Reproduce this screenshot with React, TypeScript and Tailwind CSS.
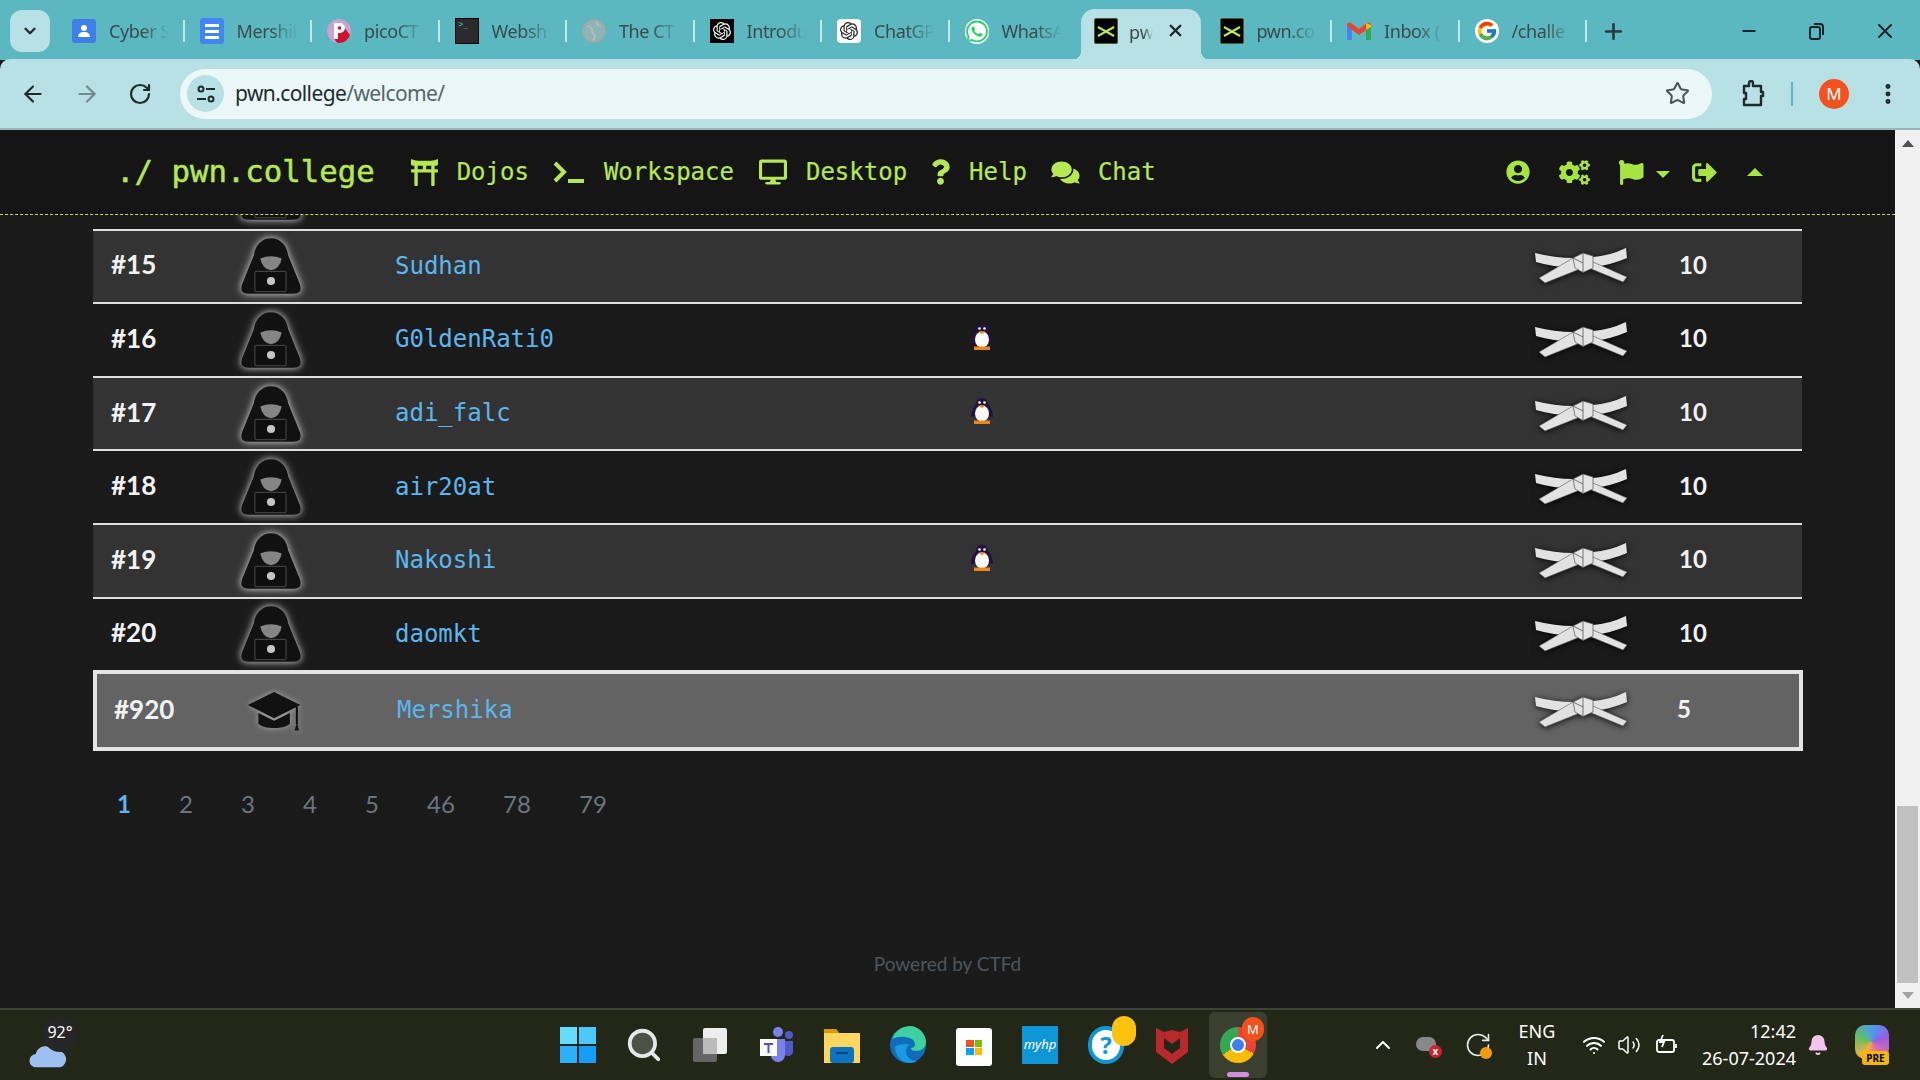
import type { ReactNode } from "react";
import { FaToriiGate, FaDesktop, FaQuestion, FaComments, FaUserCircle, FaCogs, FaFlag, FaSignOutAlt, FaWhatsapp } from "react-icons/fa";
import { SiOpenai } from "react-icons/si";
import { FcGoogle } from "react-icons/fc";
import { ArrowLeft, ArrowRight, RotateCw, Star, EllipsisVertical, Plus, Minus, X, ChevronDown, ChevronUp, Search, Wifi, Volume2, Bell } from "lucide-react";

const Hacker = () => (
  <svg viewBox="0 0 56 52" className="w-[60px] h-[56px] overflow-visible [filter:drop-shadow(0_0_3px_rgba(255,255,255,0.6))_drop-shadow(0_0_5px_rgba(255,255,255,0.35))]">
    <path d="M28 0C37 0 43 7 44 16L55 43Q58 52 48 52H8Q-2 52 1 43L12 16C13 7 19 0 28 0z" fill="#111" />
    <path d="M18 19Q28 15 38 19Q36 29 28 30Q20 29 18 19z" fill="#858585" />
    <rect x="13" y="31" width="29" height="19" rx="1" fill="#0e0e0e" stroke="#5f5f5f" strokeWidth="0.7" />
    <circle cx="28" cy="40" r="3.8" fill="#c4c4c4" />
  </svg>
);

const GradCap = () => (
  <svg viewBox="0 0 64 48" className="w-[56px] h-[42px] mt-[3px] overflow-visible [filter:drop-shadow(0_0_3px_rgba(255,255,255,0.45))]">
    <path d="M31 1 1 16l30 15 30-15z" fill="#111" />
    <path d="M13 25v12c5 7 31 7 36 0V25L31 34z" fill="#111" />
    <path d="M57 18v20" stroke="#111" strokeWidth="2.4" />
    <path d="M57 36l2.6 9h-5.200z" fill="#111" />
  </svg>
);

const Belt = () => (
  <svg viewBox="0 0 94 36" className="w-[94px] h-[36px] overflow-visible [filter:drop-shadow(0_1px_3px_rgba(0,0,0,0.85))]">
    <path d="M0 5Q20 10 38 10L40 20Q18 19 1 14z" fill="#e2e2e2" />
    <path d="M91 0Q74 8 58 9V19Q76 17 92 10z" fill="#e2e2e2" />
    <path d="M38 10 4 30l6 5 40-16z" fill="#e2e2e2" stroke="#555" strokeWidth="0.6" />
    <path d="M58 14 92 29l-4 5-39-16z" fill="#e2e2e2" stroke="#555" strokeWidth="0.6" />
    <path d="M38 10l10-5 10 3v12l-10 4.500-8-4.500z" fill="#e4e4e4" stroke="#555" strokeWidth="0.7" />
    <path d="M48 5v19.500M38 10l10 5" stroke="#555" strokeWidth="0.8" fill="none" />
  </svg>
);

const Penguin = () => (
  <svg viewBox="0 0 24 26" className="w-[24px] h-[26px] -mt-[6px]">
    <path d="M12 0c4 0 6 3 6 6 3 3 5 9 5 12 0 2-2 1-3 0-1 3-4 5-8 5s-7-2-8-5c-1 1-3 2-3 0 0-3 2-9 5-12 0-3 2-6 6-6z" fill="#26123e" />
    <ellipse cx="12" cy="15.500" rx="7" ry="8" fill="#fbfbfb" />
    <circle cx="9.500" cy="4.500" r="1.300" fill="#fff" />
    <circle cx="14.500" cy="4.500" r="1.300" fill="#fff" />
    <path d="M8.500 7.500h7L12 10.500z" fill="#f39a1d" />
    <rect x="4" y="22.500" width="16" height="3.500" fill="#f0851c" />
  </svg>
);

const PwnIcon = () => (
  <div className="w-[24px] h-[26px] bg-black rounded-[2px] flex items-center justify-center border border-[#4a5a20]">
    <svg viewBox="0 0 20 14" className="w-[18px] h-[13px]">
      <path d="M1 2l18 10M19 2 1 12" stroke="#b5e853" strokeWidth="2.4" />
    </svg>
  </div>
);

type TabInfo = { title: string; icon: ReactNode; sep?: boolean };

const tabs: TabInfo[] = [
  {
    title: "Cyber S",
    sep: true,
    icon: (
      <div className="w-[24px] h-[24px] rounded-[3px] bg-[#3f7fe8] flex flex-col items-center justify-center">
        <div className="w-[6px] h-[6px] rounded-full bg-white" />
        <div className="w-[12px] h-[5px] rounded-t-md bg-white mt-[1px]" />
      </div>
    ),
  },
  {
    title: "Mershil",
    sep: true,
    icon: (
      <div className="w-[24px] h-[26px] rounded-[3px] bg-[#4285f4] flex flex-col items-center justify-center gap-[3px]">
        <div className="w-[14px] h-[3px] bg-white" />
        <div className="w-[14px] h-[3px] bg-white" />
        <div className="w-[14px] h-[3px] bg-white" />
      </div>
    ),
  },
  {
    title: "picoCT",
    sep: true,
    icon: (
      <svg viewBox="0 0 24 24" className="w-[24px] h-[24px]">
        <circle cx="12" cy="12" r="12" fill="#c9a2d0" />
        <path d="M7 19 17 8l6 8a12 12 0 0 1-11 8c-2 0-4-2-5-5z" fill="#cf0f2e" />
        <path d="M7 4h6a5 5 0 0 1 0 10h-2v6H7z" fill="#fff" />
        <circle cx="12.500" cy="9" r="1.800" fill="#cf0f2e" />
      </svg>
    ),
  },
  {
    title: "Websh",
    sep: true,
    icon: (
      <div className="w-[24px] h-[26px] bg-[#2a2a2a] border border-black pl-[3px] pt-[1px] text-[8px] leading-[10px] text-[#5cb8c0] font-['DejaVu_Sans_Mono',monospace]">&gt;_</div>
    ),
  },
  {
    title: "The CT",
    sep: true,
    icon: (
      <svg viewBox="0 0 24 24" className="w-[24px] h-[24px]">
        <circle cx="12" cy="12" r="11" fill="#8db4b8" stroke="#a6a6a6" strokeWidth="1.5" />
        <path d="M5 7c4 1 6 3 5 6l3 4-2 5M15 2c-1 3 1 5 4 5" stroke="#b9b9b9" strokeWidth="2" fill="none" />
      </svg>
    ),
  },
  {
    title: "Introdu",
    sep: true,
    icon: (
      <div className="w-[24px] h-[24px] bg-black flex items-center justify-center">
        <SiOpenai className="w-[18px] h-[18px] text-white" />
      </div>
    ),
  },
  {
    title: "ChatGP",
    sep: true,
    icon: (
      <div className="w-[24px] h-[24px] bg-white rounded-[4px] flex items-center justify-center">
        <SiOpenai className="w-[18px] h-[18px] text-[#222]" />
      </div>
    ),
  },
  { title: "WhatsA", icon: <FaWhatsapp className="w-[25px] h-[25px] text-[#25d366] bg-white rounded-full" /> },
];

const tabsAfter: TabInfo[] = [
  { title: "pwn.co", sep: true, icon: <PwnIcon /> },
  {
    title: "Inbox (",
    sep: true,
    icon: (
      <svg viewBox="0 0 24 18" className="w-[24px] h-[20px]">
        <path d="M0 3c0-2 2-3 4-2l8 6 8-6c2-1 4 0 4 2v15h-5V8l-7 5-7-5v10H0z" fill="#ea4335" />
        <path d="M0 18V4l5 4v10z" fill="#4285f4" />
        <path d="M24 18V4l-5 4v10z" fill="#34a853" />
        <path d="M19 1l5 2v2l-5 3z" fill="#fbbc04" />
      </svg>
    ),
  },
  {
    title: "/challe",
    sep: true,
    icon: (
      <div className="w-[24px] h-[24px] bg-white rounded-full flex items-center justify-center">
        <FcGoogle className="w-[22px] h-[22px]" />
      </div>
    ),
  },
];

const Tab = ({ title, icon, sep }: TabInfo) => (
  <div className="w-[127.5px] h-[44px] shrink-0 flex items-center pl-[15px] relative">
    <div className="w-[24px] flex justify-center shrink-0">{icon}</div>
    <span className="ml-[13px] w-[60px] overflow-hidden whitespace-nowrap text-[18px] text-[#3a4a4c] font-['Noto_Sans',sans-serif] tracking-[-0.4px] [mask-image:linear-gradient(90deg,#000_55%,transparent)]">
      {title}
    </span>
    {sep && <div className="absolute right-0 top-[11px] w-[2px] h-[22px] bg-[#c6e5e8]" />}
  </div>
);

const TabStrip = () => (
  <div className="h-[60px] bg-[#5cb8c0] flex items-start shrink-0">
    <div className="ml-[10px] mt-[10px] w-[40px] h-[42px] rounded-[12px] bg-[#b8e1e5] flex items-center justify-center shrink-0">
      <ChevronDown className="w-[18px] h-[18px] text-[#1f2a2c]" strokeWidth={3} />
    </div>
    <div className="ml-[7px] mt-[9px] flex">
      {tabs.map((t) => (
        <Tab key={t.title} {...t} />
      ))}
      <div className="w-[127.5px] h-[51px] shrink-0 px-[4px]">
        <div className="relative h-full rounded-t-[14px] bg-[#b8e1e5] flex items-start pt-[9px] pl-[13px]">
          <PwnIcon />
          <span className="ml-[11px] mt-[1px] w-[24px] overflow-hidden text-[18px] text-[#3a4a4c] font-['Noto_Sans',sans-serif] [mask-image:linear-gradient(90deg,#000_60%,transparent)]">pw</span>
          <X className="ml-[13px] mt-[3px] w-[19px] h-[19px] text-[#1b2426]" strokeWidth={3} />
          <span className="absolute left-[-10px] bottom-0 w-[10px] h-[10px] bg-[radial-gradient(circle_at_0_0,transparent_10px,#b8e1e5_10.5px)]" />
          <span className="absolute right-[-10px] bottom-0 w-[10px] h-[10px] bg-[radial-gradient(circle_at_100%_0,transparent_10px,#b8e1e5_10.5px)]" />
        </div>
      </div>
      {tabsAfter.map((t) => (
        <Tab key={t.title} {...t} />
      ))}
      <Plus className="ml-[14px] mt-[10px] w-[25px] h-[25px] text-[#26393c]" strokeWidth={2.5} />
    </div>
    <div className="ml-auto mt-[19px] flex items-center">
      <Minus className="w-[20px] h-[20px] text-[#1b2426] mr-[47px]" strokeWidth={2.2} />
      <svg viewBox="0 0 20 20" className="w-[20px] h-[20px] mr-[47px]" fill="none" stroke="#1b2426" strokeWidth="2">
        <rect x="4" y="6" width="10" height="12" rx="2" />
        <path d="M8 3h6a3 3 0 0 1 3 3v8" />
      </svg>
      <X className="w-[24px] h-[24px] text-[#1b2426] mr-[23px]" strokeWidth={2} />
    </div>
  </div>
);

const Toolbar = () => (
  <div className="h-[71px] shrink-0 bg-[#b8e1e5] border-b-2 border-[#9ab5b8] rounded-t-[10px] flex items-center -mt-px">
    <ArrowLeft className="ml-[20px] w-[26px] h-[26px] text-[#1f2a2c]" strokeWidth={2} />
    <ArrowRight className="ml-[28px] w-[26px] h-[26px] text-[#74898c]" strokeWidth={2} />
    <RotateCw className="ml-[28px] w-[24px] h-[24px] text-[#1f2a2c]" strokeWidth={2.2} />
    <div className="ml-[28px] w-[1532px] h-[50px] rounded-full bg-[#ebf7f8] flex items-center pl-[7px]">
      <div className="w-[37px] h-[37px] rounded-full bg-[#b8e1e5] flex items-center justify-center">
        <svg viewBox="0 0 20 20" className="w-[20px] h-[20px]" fill="none" stroke="#1f2a2c" strokeWidth="2">
          <circle cx="5" cy="5" r="2.500" />
          <path d="M10 5h9M1 15h9" />
          <circle cx="15" cy="15" r="2.500" />
        </svg>
      </div>
      <span className="ml-[11px] text-[21px] text-[#1f2a2c] font-['Noto_Sans',sans-serif] tracking-[-0.6px]">
        pwn.college<span className="text-[#566668]">/welcome/</span>
      </span>
      <Star className="ml-auto mr-[22px] w-[25px] h-[25px] text-[#4a5658]" strokeWidth={2} />
    </div>
    <svg viewBox="0 0 24 28" className="ml-[29px] w-[24px] h-[28px]" fill="none" stroke="#1f2a2c" strokeWidth="2.4" strokeLinejoin="round">
      <path d="M3 6h5V3a2 2 0 0 1 4 0v3h8v6h2v4h-2v9H3v-6h2v-6H3z" />
    </svg>
    <div className="ml-[26px] w-[2px] h-[24px] bg-[#5cb8c0]" />
    <div className="ml-[26px] w-[30px] h-[30px] rounded-full bg-[#f4511e] text-white text-[17px] flex items-center justify-center font-['Noto_Sans',sans-serif]">M</div>
    <EllipsisVertical className="ml-[26px] w-[26px] h-[26px] text-[#1f2a2c]" strokeWidth={2.6} />
  </div>
);

const NavLink = ({ icon, label, className }: { icon: ReactNode; label: string; className: string }) => (
  <div className={`flex items-center ${className}`}>
    {icon}
    <span className="text-[24px] [-webkit-text-stroke:0.2px]">{label}</span>
  </div>
);

const Nav = () => (
  <nav className="h-[85px] shrink-0 bg-[#151515] border-b border-dashed border-[#c5e04a] flex items-center text-[#b5e853] font-['DejaVu_Sans_Mono',monospace]">
    <span className="ml-[116px] text-[30.7px] leading-none whitespace-pre [-webkit-text-stroke:0.5px]">./ pwn.college</span>
    <NavLink className="ml-[36px]" label="Dojos" icon={<FaToriiGate className="w-[27px] h-[27px] mr-[19px]" />} />
    <NavLink
      className="ml-[24px]"
      label="Workspace"
      icon={
        <svg viewBox="0 0 32 24" className="w-[32px] h-[24px] mr-[19px]" fill="none" stroke="currentColor" strokeWidth="4">
          <path d="M2 3l9 9-9 9" />
          <path d="M15 21h16" />
        </svg>
      }
    />
    <NavLink className="ml-[25px]" label="Desktop" icon={<FaDesktop className="w-[28px] h-[26px] mr-[19px]" />} />
    <NavLink className="ml-[24px]" label="Help" icon={<FaQuestion className="w-[19px] h-[26px] mr-[19px]" />} />
    <NavLink className="ml-[24px]" label="Chat" icon={<FaComments className="w-[29px] h-[25px] mr-[18px]" />} />
    <div className="ml-auto flex items-center text-[#a6e53f]">
      <FaUserCircle className="w-[24px] h-[24px]" />
      <FaCogs className="ml-[29px] w-[31px] h-[25px]" />
      <FaFlag className="ml-[28px] w-[26px] h-[25px]" />
      <div className="ml-[12px] mt-[4px] w-0 h-0 border-x-[7px] border-x-transparent border-t-[7px] border-t-[#a6e53f]" />
      <FaSignOutAlt className="ml-[22px] w-[25px] h-[25px]" />
      <div className="ml-[30px] mr-[132px] w-0 h-0 border-x-[8px] border-x-transparent border-b-[8px] border-b-[#a6e53f]" />
    </div>
  </nav>
);

type RowInfo = { rank: number; name: string; penguin?: boolean };

const rows: RowInfo[] = [
  { rank: 15, name: "Sudhan" },
  { rank: 16, name: "G0ldenRati0", penguin: true },
  { rank: 17, name: "adi_falc", penguin: true },
  { rank: 18, name: "air20at" },
  { rank: 19, name: "Nakoshi", penguin: true },
  { rank: 20, name: "daomkt" },
];

const rowGrid = "grid grid-cols-[135px_86px_646px_44px_526px_104px_168px] items-center";

const Row = ({ rank, name, penguin, odd }: RowInfo & { odd: boolean }) => (
  <div className={`${rowGrid} h-[73.6px] border-t-2 border-[#dedede] ${odd ? "bg-[#333333]" : ""}`}>
    <span className="pl-[18px] pb-[3px] text-[26px] font-bold text-[#f2f2f2] font-['Lato',sans-serif]">#{rank}</span>
    <div className="flex justify-center">
      <Hacker />
    </div>
    <span className="pl-[81px] pb-[1px] text-[24px] text-[#5ab7f0] font-['DejaVu_Sans_Mono',monospace]">{name}</span>
    <div className="flex justify-center">{penguin && <Penguin />}</div>
    <div />
    <div className="flex justify-center">
      <Belt />
    </div>
    <span className="pl-[45px] pb-[3px] text-[24px] font-bold text-[#f2f2f2] font-['Lato',sans-serif]">10</span>
  </div>
);

const pages = [
  { n: "1", w: "w-[62px]" },
  { n: "2", w: "w-[62px]" },
  { n: "3", w: "w-[62px]" },
  { n: "4", w: "w-[62px]" },
  { n: "5", w: "w-[62px]" },
  { n: "46", w: "w-[76px]" },
  { n: "78", w: "w-[76px]" },
  { n: "79", w: "w-[76px]" },
];

const Scrollbar = () => (
  <div className="w-[25px] shrink-0 bg-[#f1f1f1] flex flex-col items-center">
    <div className="mt-[10px] w-0 h-0 border-x-[6px] border-x-transparent border-b-[7px] border-b-[#505050]" />
    <div className="mt-[659px] w-[21px] h-[177px] bg-[#c1c1c1]" />
    <div className="mt-[9px] w-0 h-0 border-x-[6px] border-x-transparent border-t-[7px] border-t-[#a3a3a3]" />
  </div>
);

const Taskbar = () => (
  <div className="h-[72px] shrink-0 bg-[#222717] border-t-2 border-[#3e4234] flex items-center text-white font-['Noto_Sans',sans-serif]">
    <div className="ml-[29px] w-[40px] relative h-[50px]">
      <svg viewBox="0 0 40 28" className="absolute bottom-0 left-0 w-[38px] h-[30px]">
        <path d="M8 27a7 7 0 0 1-1-14 11 11 0 0 1 20-3 9 9 0 0 1 6 17z" fill="#9cc0f0" />
      </svg>
      <div className="absolute left-[14px] top-[-4px] w-[34px] h-[36px] rounded-full bg-[#262626] text-[16px] leading-[32px] text-center">92°</div>
    </div>
    <div className="ml-[476px] flex items-center">
      <div className="w-[66px] flex justify-center">
        <div className="grid grid-cols-2 gap-[2px] w-[36px]">
          <div className="h-[17px] bg-[#63dcfd]" />
          <div className="h-[17px] bg-[#4cc8fb]" />
          <div className="h-[17px] bg-[#2bb0fb]" />
          <div className="h-[17px] bg-[#169cf9]" />
        </div>
      </div>
      <div className="w-[66px] flex justify-center">
        <Search className="w-[38px] h-[38px] text-[#e8e8e8] fill-[#4c5246]" strokeWidth={2.4} />
      </div>
      <div className="w-[66px] flex justify-center">
        <svg viewBox="0 0 36 36" className="w-[36px] h-[36px]">
          <rect x="1" y="11" width="24" height="24" rx="2" fill="#666" />
          <rect x="11" y="1" width="24" height="26" rx="2" fill="#eee" />
          <rect x="11" y="11" width="14" height="16" fill="#bbb" />
        </svg>
      </div>
      <div className="w-[66px] flex justify-center">
        <svg viewBox="0 0 36 38" className="w-[36px] h-[38px]">
          <circle cx="20" cy="6" r="5" fill="#7b83eb" />
          <circle cx="31" cy="9" r="4" fill="#5059c9" />
          <path d="M13 13h14v16a7 7 0 0 1-14 0z" fill="#7b83eb" />
          <path d="M27 15h8v11a5 5 0 0 1-8 3z" fill="#5059c9" />
          <rect x="2" y="13" width="17" height="17" fill="#fff" />
          <path d="M6 17h9v2h-3.500v8h-2v-8H6z" fill="#4b53bc" />
        </svg>
      </div>
      <div className="w-[66px] flex justify-center">
        <svg viewBox="0 0 36 36" className="w-[36px] h-[36px]">
          <path d="M0 2h12l3 4h21v30H0z" fill="#ffd75e" />
          <path d="M0 2h12l3 4H0z" fill="#d99a00" />
          <rect x="6" y="20" width="24" height="16" rx="3" fill="#0a73c2" />
          <rect x="12" y="25" width="12" height="2" fill="#0a3f75" />
        </svg>
      </div>
      <div className="w-[66px] flex justify-center">
        <svg viewBox="0 0 36 38" className="w-[36px] h-[38px]">
          <circle cx="18" cy="19" r="18" fill="#0f6cbd" />
          <path d="M2 13C6 3 14 0 20 0c9 0 16 8 16 16 0 6-5 9-10 9-3 0-5-1-5-3 4 0 5-3 3-7-3-4-14-6-22-2z" fill="#3fd0a0" />
          <path d="M5 21c0 9 7 16 15 16 3 0 5-1 7-2-7 0-11-5-11-10 0-3 2-6 4-7-6 0-12 0-15 3z" fill="#1a9ae0" />
        </svg>
      </div>
      <div className="w-[66px] flex justify-center">
        <div className="w-[36px] h-[38px] bg-white rounded-[3px] flex items-center justify-center mt-[4px]">
          <div className="grid grid-cols-2 gap-[1px] w-[16px]">
            <div className="h-[7px] bg-[#f25022]" />
            <div className="h-[7px] bg-[#7fba00]" />
            <div className="h-[7px] bg-[#00a4ef]" />
            <div className="h-[7px] bg-[#ffb900]" />
          </div>
        </div>
      </div>
      <div className="w-[66px] flex justify-center">
        <div className="w-[36px] h-[38px] bg-[#0f96d6] flex items-center justify-center text-[13px] italic">myhp</div>
      </div>
      <div className="w-[66px] flex justify-center">
        <div className="relative w-[36px] h-[38px] rounded-full bg-white border-[4px] border-[#0f96d6] flex items-center justify-center text-[#0f96d6] text-[24px] font-bold">
          ?
          <div className="absolute left-[20px] top-[-14px] w-[24px] h-[30px] rounded-full bg-[#ffc20e]" />
        </div>
      </div>
      <div className="w-[66px] flex justify-center">
        <svg viewBox="0 0 32 38" className="w-[32px] h-[38px]">
          <path d="M0 2l8 4 8-2 8 2 8-4v24L16 38 0 26z" fill="#b9292c" />
          <path d="M8 12l8 6 8-6v10l-8 6-8-6z" fill="#222717" />
        </svg>
      </div>
      <div className="w-[66px] flex justify-center">
        <div className="relative w-[58px] h-[66px] rounded-[6px] bg-[#3a3f30] flex items-center justify-center">
          <div className="w-[36px] h-[36px] rounded-full bg-[conic-gradient(#ea4335_0_33%,#fbbc04_33%_66%,#34a853_66%_100%)] flex items-center justify-center">
            <div className="w-[16px] h-[16px] rounded-full bg-[#3f7fe8] border-2 border-white" />
          </div>
          <div className="absolute right-[3px] top-[5px] w-[22px] h-[24px] rounded-full bg-[#f4511e] text-[13px] leading-[24px] text-center">M</div>
          <div className="absolute bottom-[1px] w-[22px] h-[5px] rounded-sm bg-[#d48ee0]" />
        </div>
      </div>
    </div>
    <ChevronUp className="ml-[100px] w-[24px] h-[24px]" strokeWidth={2} />
    <div className="ml-[21px] relative w-[24px] h-[20px]">
      <div className="w-[20px] h-[14px] mt-[2px] rounded-full bg-[#888]" />
      <div className="absolute right-[-2px] bottom-[-3px] w-[13px] h-[13px] rounded-full bg-[#d0202c] text-[10px] leading-[13px] text-center font-bold">x</div>
    </div>
    <div className="ml-[24px] relative w-[28px] h-[28px]">
      <RotateCw className="w-[28px] h-[28px] text-[#e8e8e8]" strokeWidth={1.4} />
      <div className="absolute right-0 bottom-0 w-[12px] h-[12px] rounded-full bg-[#f59a0c]" />
    </div>
    <div className="ml-[23px] w-[44px] flex flex-col items-center text-[18px] leading-[27px]">
      <span>ENG</span>
      <span>IN</span>
    </div>
    <Wifi className="ml-[23px] w-[24px] h-[24px]" strokeWidth={2} />
    <Volume2 className="ml-[11px] w-[24px] h-[24px]" strokeWidth={1.5} />
    <svg viewBox="0 0 24 24" className="ml-[13px] w-[24px] h-[24px]" fill="none" stroke="#fff" strokeWidth="1.8">
      <rect x="3" y="7" width="17" height="12" rx="2" />
      <path d="M22 11v4" />
      <path d="M9 2 6 9h4l-2 5" />
    </svg>
    <div className="ml-[10px] w-[108px] flex flex-col items-end text-[18px] leading-[27px]">
      <span>12:42</span>
      <span>26-07-2024</span>
    </div>
    <Bell className="ml-[11px] w-[22px] h-[26px] text-[#f3c4f0] fill-[#f3c4f0]" />
    <div className="ml-[26px] relative w-[38px] h-[40px]">
      <div className="w-[34px] h-[34px] rounded-[10px] bg-[conic-gradient(#4b9df0,#9a5be0,#e06ab0,#f0b040,#60c060,#4b9df0)]" />
      <div className="absolute bottom-0 left-[7px] w-[27px] h-[14px] rounded-[3px] bg-[#f5b50a] text-black text-[10px] leading-[14px] text-center font-bold">PRE</div>
    </div>
  </div>
);

export default function App() {
  return (
    <div className="w-[1920px] h-[1080px] overflow-hidden flex flex-col bg-[#1a1a1a]">
      <TabStrip />
      <Toolbar />
      <div className="flex-1 min-h-0 flex">
        <div className="flex-1 min-w-0 flex flex-col">
          <Nav />
          <main className="flex-1 min-h-0 overflow-hidden px-[93px]">
            {/* list is scrolled, so row 14 only shows its avatar's last few pixels */}
            <div className={`${rowGrid} h-[73.6px] mt-[-60px]`}>
              <div />
              <div className="flex justify-center">
                <Hacker />
              </div>
            </div>
            {rows.map((r, i) => (
              <Row key={r.rank} {...r} odd={i % 2 === 0} />
            ))}
            <div className={`${rowGrid} h-[80.4px] border-4 border-[#e4e4e4] bg-[#636363] -mr-px`}>
              <span className="pl-[17px] pb-[2px] text-[26px] font-bold text-[#f2f2f2] font-['Lato',sans-serif]">#920</span>
              <div className="flex justify-center">
                <GradCap />
              </div>
              <span className="pl-[79px] pb-[1px] text-[24px] text-[#5ab7f0] font-['DejaVu_Sans_Mono',monospace]">Mershika</span>
              <div />
              <div />
              <div className="flex justify-center -ml-[9px]">
                <Belt />
              </div>
              <span className="pl-[39px] pb-[2px] text-[24px] font-bold text-[#f2f2f2] font-['Lato',sans-serif]">5</span>
            </div>
            <div className="mt-[35px] flex pl-[24px] text-[24px] font-['Lato',sans-serif] text-[#6c757d]">
              {pages.map((p) => (
                <span key={p.n} className={`${p.w} ${p.n === "1" ? "font-bold text-[#5ab7f0]" : ""}`}>
                  {p.n}
                </span>
              ))}
            </div>
            <p className="mt-[128px] text-center text-[19px] text-[#4f565c] font-['Lato',sans-serif]">Powered by CTFd</p>
          </main>
        </div>
        <Scrollbar />
      </div>
      <Taskbar />
    </div>
  );
}
